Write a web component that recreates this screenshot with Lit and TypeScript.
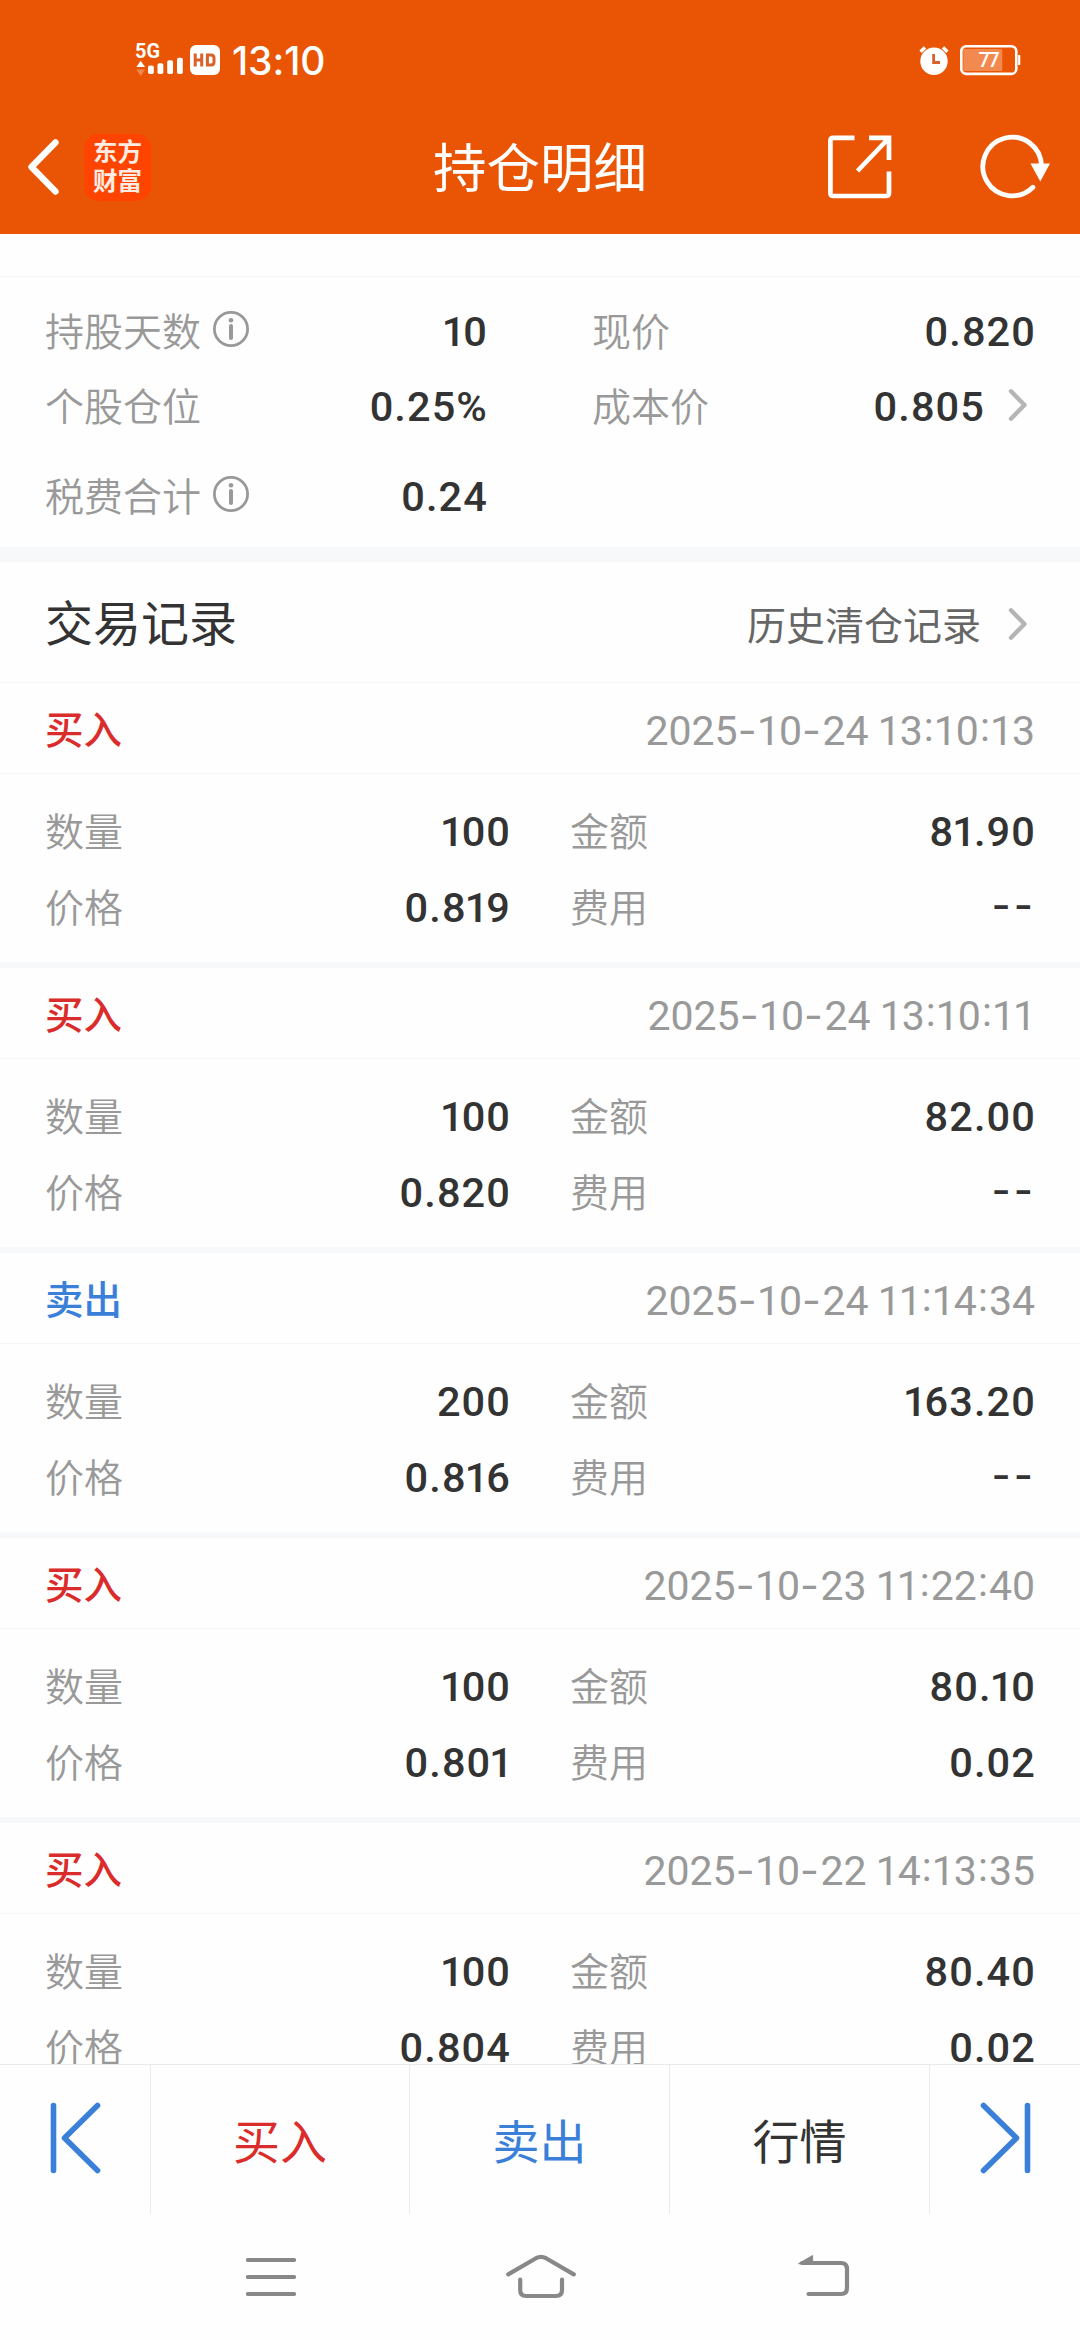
import { LitElement, html, css, svg } from "lit";
import { customElement, property } from "lit/decorators.js";
import { classMap } from "lit/directives/class-map.js";

interface Trade {
  side: "buy" | "sell";
  time: string;
  qty: string;
  amount: string;
  price: string;
  fee: string;
}

const TRADES: Trade[] = [
  { side: "buy", time: "2025-10-24 13:10:13", qty: "100", amount: "81.90", price: "0.819", fee: "--" },
  { side: "buy", time: "2025-10-24 13:10:11", qty: "100", amount: "82.00", price: "0.820", fee: "--" },
  { side: "sell", time: "2025-10-24 11:14:34", qty: "200", amount: "163.20", price: "0.816", fee: "--" },
  { side: "buy", time: "2025-10-23 11:22:40", qty: "100", amount: "80.10", price: "0.801", fee: "0.02" },
  { side: "buy", time: "2025-10-22 14:13:35", qty: "100", amount: "80.40", price: "0.804", fee: "0.02" },
];

const shared = css`
  :host {
    display: block;
    box-sizing: border-box;
    font-family: Roboto, "Noto Sans CJK SC", sans-serif;
    color: #333;
  }
  * { box-sizing: border-box; }
  svg { display: block; flex: none; fill: none; }
  .label { font: 350 39px/60px "Noto Sans CJK SC", sans-serif; color: #999; white-space: nowrap; margin-top: -5px; }
  .value { font: 500 41.5px/60px Roboto, sans-serif; letter-spacing: 1.1px; margin-right: -1px; color: #333; white-space: nowrap; text-align: right; }
  .one { margin: 0 -3px 0 -2px; }
`;

/** Proportional spacing for the narrow digit "1", raised colons and wide dashes. */
const figures = (text: string) =>
  text.split(/([-:1])/).map((part) =>
    part === "1" ? html`<span class="one">1</span>`
    : part === "-" ? html`<span class="dash">-</span>`
    : part === ":" ? html`<span class="colon">:</span>`
    : part);

const chevron = html`<svg width="20" height="34" viewBox="0 0 20 34">
  <path d="M3 3.3L16.5 17L3 30.7" stroke="#b5b5b5" stroke-width="4.4" stroke-linecap="round" stroke-linejoin="round" />
</svg>`;

const info = html`<svg width="36" height="36" viewBox="0 0 36 36">
  <circle cx="18" cy="18" r="16.6" stroke="#999" stroke-width="2.8" />
  <circle cx="18" cy="9.3" r="2.3" fill="#999" />
  <path d="M18 15V27" stroke="#999" stroke-width="4" stroke-linecap="round" />
</svg>`;

@customElement("status-bar")
class StatusBar extends LitElement {
  static styles = [shared, css`
    :host { height: 100px; padding: 40px 59px 0 135px; display: flex; align-items: flex-start; color: #fff; }
    .hd { margin: 5px 0 0 7px; }
    .time { margin: 2px 0 0 12px; font: 500 39px/38px Inter, sans-serif; letter-spacing: -0.1px; }
    .right { margin: 4px 0 0 auto; display: flex; gap: 11px; }
    text { font-family: Roboto, sans-serif; }
  `];
  render() {
    return html`
      <svg width="48" height="37" viewBox="0 -3 48 37">
        <text x="0" y="15.2" font-size="21" font-weight="700" fill="#fff" textLength="25" lengthAdjust="spacingAndGlyphs">5G</text>
        <path d="M5.7 17.8L10 24H1.4z" fill="#fff" />
        <path d="M5.7 33L10 26.5H1.4z" fill="#fff" opacity=".3" />
        ${[[13, 22.5], [22.5, 20.3], [32.2, 17.3], [42, 14.7]].map(([x, y]) => svg`
          <rect x=${x} y=${y} width="5.8" height=${31 - y} rx="1.8" fill="#fff" />`)}
      </svg>
      <svg class="hd" width="30" height="30" viewBox="0 0 30 30">
        <rect width="30" height="30" rx="6" fill="#fff" />
        <path d="M5.2 8.5V21.5M11.7 8.5V21.5M5.2 15H11.7M17.4 10H21Q24 10 24 13V17Q24 20 21 20H17.4Z" stroke="#d9622b" stroke-width="3" />
      </svg>
      <div class="time">13:10</div>
      <div class="right">
        <svg width="30" height="32" viewBox="0 0 30 32">
          <circle cx="15" cy="17.3" r="13.7" fill="#fff" />
          <path d="M1.6 7.8L6 3.4M28.4 7.8L24 3.4" stroke="#fff" stroke-width="3.4" />
          <path d="M14.6 10V18.5H21" stroke="#d9622b" stroke-width="2.8" />
        </svg>
        <svg width="61" height="32" viewBox="0 0 61 32">
          <rect x="1.3" y="2.3" width="55" height="27.6" rx="5" stroke="#fff" stroke-width="2.6" />
          <rect x="3.3" y="5" width="39" height="22" rx="1.5" fill="#f28a50" />
          <path d="M59.2 11V21" stroke="#fff" stroke-width="2.2" />
          <text x="18.5" y="23.4" font-size="20" font-weight="500" fill="#fff" textLength="21">77</text>
        </svg>
      </div>`;
  }
}

@customElement("title-bar")
class TitleBar extends LitElement {
  static styles = [shared, css`
    :host { height: 134px; padding: 0 26px; display: grid; grid-template-columns: 1fr auto 1fr; align-items: center; color: #fff; }
    .left, .right { display: flex; align-items: center; }
    .left { gap: 24px; }
    .right { justify-content: flex-end; gap: 87px; }
    .logo {
      width: 67px; height: 67px; border-radius: 15px; background: #ff4400; padding-top: 2px;
      font: 700 24.5px/29.5px "Noto Sans CJK SC", sans-serif; text-align: center; color: #ffece2;
    }
    .title { font: 400 53.5px/70px "Noto Sans CJK SC", sans-serif; white-space: nowrap; margin-top: -4px; }
  `];
  render() {
    return html`
      <div class="left">
        <svg width="34" height="58" viewBox="0 0 34 58">
          <path d="M29.5 4.5L5.5 29L29.5 53.5" stroke="#fff" stroke-width="6.4" stroke-linecap="round" stroke-linejoin="round" />
        </svg>
        <div class="logo">东方<br />财富</div>
      </div>
      <div class="title">持仓明细</div>
      <div class="right">
        <svg width="64" height="64" viewBox="0 0 64 64">
          <path d="M26.5 2.9H5.4Q2.4 2.9 2.4 5.9V58Q2.4 61 5.4 61H58Q61 61 61 58V36.5M41 2.9H61V25M60 4L29.5 36" stroke="#fff" stroke-width="4.7" />
        </svg>
        <svg width="75" height="66" viewBox="0 0 75 66">
          <path d="M62.5 32A29.3 29.3 0 1 0 53.9 53.2" stroke="#fff" stroke-width="4.8" stroke-linecap="round" />
          <path d="M51.5 29.5H71L61.3 47.5Z" fill="#fff" />
        </svg>
      </div>`;
  }
}

@customElement("position-summary")
class PositionSummary extends LitElement {
  static styles = [shared, css`
    :host { height: 328px; padding-top: 42px; background: #fefefe; border-bottom: 15px solid #f6f8fa; }
    .body {
      border-top: 1px solid #f3f4f6; padding: 24px 45px 0; display: grid;
      grid-template-columns: 442px 1fr; grid-template-rows: 75px 90px 60px; column-gap: 105px;
    }
    .cell { display: flex; align-items: center; height: 60px; }
    .value { margin-left: auto; padding-top: 1px; }
    .info { margin-left: 12px; margin-top: -4px; }
    .more { margin: -3px 7px 0 24px; }
  `];
  render() {
    return html`<div class="body">
      <div class="cell"><span class="label">持股天数</span><span class="info">${info}</span><span class="value">${figures("10")}</span></div>
      <div class="cell"><span class="label">现价</span><span class="value">0.820</span></div>
      <div class="cell"><span class="label">个股仓位</span><span class="value">0.25%</span></div>
      <div class="cell"><span class="label">成本价</span><span class="value">0.805</span><span class="more">${chevron}</span></div>
      <div class="cell"><span class="label">税费合计</span><span class="info">${info}</span><span class="value">0.24</span></div>
    </div>`;
  }
}

@customElement("trade-record")
class TradeRecord extends LitElement {
  @property({ attribute: false }) trade!: Trade;
  static styles = [shared, css`
    :host { height: 285px; border-bottom: 6px solid #f6f8fa; background: #fefefe; flex: none; }
    .head { height: 91px; padding: 0 45px; border-bottom: 1px solid #f5f6f7; display: flex; align-items: center; justify-content: space-between; }
    .side { font: 500 38.5px/60px "Noto Sans CJK SC", sans-serif; margin-top: -2px; }
    .buy { color: #db2c2c; }
    .sell { color: #3a80d8; }
    .date { font: 400 41px/60px Roboto, sans-serif; color: #999; padding-top: 4px; white-space: pre; }
    .date .one { margin: 0 -1px; }
    .date .dash { font-family: Inter, sans-serif; letter-spacing: 1.5px; }
    .colon { display: inline-block; width: 12px; text-align: center; transform: translateY(-4px); }
    .grid { padding: 27px 45px 0; display: grid; grid-template-columns: 90px 375px 150px 1fr; grid-template-rows: 76px 60px; }
    .grid .label { margin-top: -2px; }
    .grid .label:nth-child(4n + 3) { padding-left: 60px; }
    .value { padding-top: 1px; }
    .empty { font-family: Inter, sans-serif; letter-spacing: 3px; margin-top: -3px; }
  `];
  render() {
    const t = this.trade;
    const blank = t.fee === "--";
    return html`
      <div class="head">
        <span class=${classMap({ side: true, buy: t.side === "buy", sell: t.side === "sell" })}>${t.side === "buy" ? "买入" : "卖出"}</span>
        <span class="date">${figures(t.time)}</span>
      </div>
      <div class="grid">
        <span class="label">数量</span><span class="value">${figures(t.qty)}</span>
        <span class="label">金额</span><span class="value">${figures(t.amount)}</span>
        <span class="label">价格</span><span class="value">${figures(t.price)}</span>
        <span class="label">费用</span><span class=${classMap({ value: true, empty: blank })}>${t.fee}</span>
      </div>`;
  }
}

@customElement("action-bar")
class ActionBar extends LitElement {
  static styles = [shared, css`
    :host {
      height: 150px; background: #fefefe; border-top: 1px solid #e9e9ea; display: grid;
      grid-template-columns: 151px 259px 260px 260px 150px; flex: none;
    }
    .cell { display: flex; align-items: center; justify-content: center; border-right: 1px solid #ebebec; font: 400 47px/70px "Noto Sans CJK SC", sans-serif; padding-bottom: 2px; }
    .cell:last-child { border-right: 0; }
    .icon { padding-bottom: 4px; }
    .buy { color: #db2c2c; }
    .sell { color: #3a80d8; }
    .flip { transform: scaleX(-1); }
  `];
  render() {
    const k = svg`<path d="M3.5 3.5V68.5M47.5 3.5L14.5 36L47.5 68.5" stroke="#3a80d8" stroke-width="5.6" stroke-linecap="round" stroke-linejoin="round" />`;
    return html`
      <div class="cell icon"><svg width="51" height="72" viewBox="0 0 51 72">${k}</svg></div>
      <div class="cell buy">买入</div>
      <div class="cell sell">卖出</div>
      <div class="cell">行情</div>
      <div class="cell icon"><svg class="flip" width="51" height="72" viewBox="0 0 51 72">${k}</svg></div>`;
  }
}

@customElement("system-nav")
class SystemNav extends LitElement {
  static styles = [shared, css`
    :host { height: 126px; background: #fefefe; display: flex; padding: 39px 0 0 246px; flex: none; }
    path { stroke: #888; stroke-width: 4.2; stroke-linecap: round; stroke-linejoin: round; }
    .home { margin: 0 222px 0 210px; }
    .tip { fill: #888; stroke-width: 1; }
  `];
  render() {
    return html`
      <svg width="50" height="48" viewBox="0 0 50 48"><path d="M2 7H48M2 24H48M2 41H48" /></svg>
      <svg class="home" width="70" height="48" viewBox="0 0 70 48"><path d="M2.2 21.4L30 5.2Q35 2.6 40 5.2L67.8 21.4M14.2 26.5V37Q14.2 43 20.2 43H50Q56 43 56 37V26.5" /></svg>
      <svg width="52" height="48" viewBox="0 0 52 48"><path d="M4 10H43Q49 10 49 16V35Q49 41 43 41H10.5" /><path class="tip" d="M.8 10.5L14.6 2.5V11Z" /></svg>`;
  }
}

@customElement("app-root")
class AppRoot extends LitElement {
  static styles = [shared, css`
    :host { width: 1080px; height: 2340px; display: flex; flex-direction: column; background: #fefefe; overflow: hidden; }
    .top { background: #e95504; flex: none; }
    .scroll { height: 1830px; overflow: hidden; flex: none; display: flex; flex-direction: column; }
    .section { height: 121px; flex: none; padding: 3px 52px 0 45px; display: flex; align-items: center; border-bottom: 1px solid #f5f6f7; }
    .heading { font: 400 48px/60px "Noto Sans CJK SC", sans-serif; margin-top: -7px; }
    .link { margin: -2px 27px 0 auto; font: 400 39px/60px "Noto Sans CJK SC", sans-serif; color: #666; }
    .summary { flex: none; }
  `];
  render() {
    return html`
      <div class="top"><status-bar></status-bar><title-bar></title-bar></div>
      <div class="scroll">
        <position-summary class="summary"></position-summary>
        <div class="section">
          <span class="heading">交易记录</span><span class="link">历史清仓记录</span>${chevron}
        </div>
        ${TRADES.map((t) => html`<trade-record .trade=${t}></trade-record>`)}
      </div>
      <action-bar></action-bar>
      <system-nav></system-nav>`;
  }
}
